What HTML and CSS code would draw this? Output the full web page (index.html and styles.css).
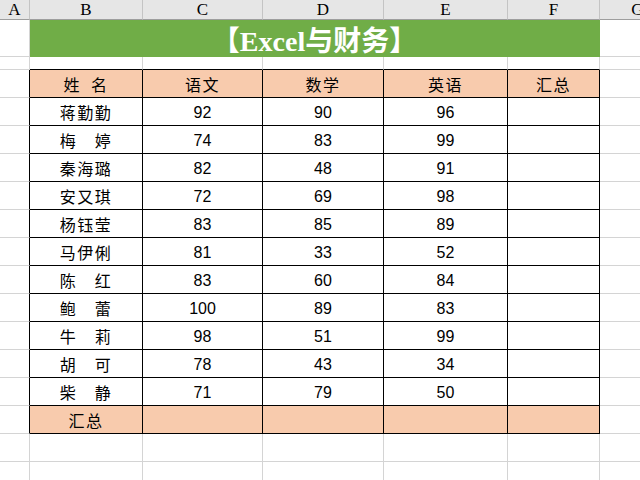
FILE: index.html
```html
<!DOCTYPE html>
<html lang="zh">
<head>
<meta charset="utf-8">
<title>Excel与财务</title>
<link rel="stylesheet" href="styles.css">
</head>
<body>
<div class="sheet">
  <div class="c hd">A</div><div class="c hd">B</div><div class="c hd">C</div><div class="c hd">D</div><div class="c hd">E</div><div class="c hd">F</div><div class="c hd">G</div>

  <div class="c"></div><div class="c title">【Excel与财务】</div><div class="c"></div>

  <div class="c"></div><div class="c tp"></div><div class="c tp"></div><div class="c tp"></div><div class="c tp"></div><div class="c tp"></div><div class="c"></div>

  <div class="c lt"></div><div class="c t pk txt">姓&nbsp;&nbsp;名</div><div class="c t pk txt">语文</div><div class="c t pk txt">数学</div><div class="c t pk txt">英语</div><div class="c t pk txt">汇总</div><div class="c"></div>

  <div class="c lt"></div><div class="c t txt">蒋勤勤</div><div class="c t num">92</div><div class="c t num">90</div><div class="c t num">96</div><div class="c t"></div><div class="c"></div>
  <div class="c lt"></div><div class="c t txt">梅　婷</div><div class="c t num">74</div><div class="c t num">83</div><div class="c t num">99</div><div class="c t"></div><div class="c"></div>
  <div class="c lt"></div><div class="c t txt">秦海璐</div><div class="c t num">82</div><div class="c t num">48</div><div class="c t num">91</div><div class="c t"></div><div class="c"></div>
  <div class="c lt"></div><div class="c t txt">安又琪</div><div class="c t num">72</div><div class="c t num">69</div><div class="c t num">98</div><div class="c t"></div><div class="c"></div>
  <div class="c lt"></div><div class="c t txt">杨钰莹</div><div class="c t num">83</div><div class="c t num">85</div><div class="c t num">89</div><div class="c t"></div><div class="c"></div>
  <div class="c lt"></div><div class="c t txt">马伊俐</div><div class="c t num">81</div><div class="c t num">33</div><div class="c t num">52</div><div class="c t"></div><div class="c"></div>
  <div class="c lt"></div><div class="c t txt">陈　红</div><div class="c t num">83</div><div class="c t num">60</div><div class="c t num">84</div><div class="c t"></div><div class="c"></div>
  <div class="c lt"></div><div class="c t txt">鲍　蕾</div><div class="c t num">100</div><div class="c t num">89</div><div class="c t num">83</div><div class="c t"></div><div class="c"></div>
  <div class="c lt"></div><div class="c t txt">牛　莉</div><div class="c t num">98</div><div class="c t num">51</div><div class="c t num">99</div><div class="c t"></div><div class="c"></div>
  <div class="c lt"></div><div class="c t txt">胡　可</div><div class="c t num">78</div><div class="c t num">43</div><div class="c t num">34</div><div class="c t"></div><div class="c"></div>
  <div class="c lt"></div><div class="c t txt">柴　静</div><div class="c t num">71</div><div class="c t num">79</div><div class="c t num">50</div><div class="c t"></div><div class="c"></div>

  <div class="c lt"></div><div class="c t pk txt">汇总</div><div class="c t pk"></div><div class="c t pk"></div><div class="c t pk"></div><div class="c t pk"></div><div class="c"></div>

  <div class="c"></div><div class="c"></div><div class="c"></div><div class="c"></div><div class="c"></div><div class="c"></div><div class="c"></div>
  <div class="c"></div><div class="c"></div><div class="c"></div><div class="c"></div><div class="c"></div><div class="c"></div><div class="c"></div>
</div>
</body>
</html>
```

FILE: styles.css
```css
html, body {
  margin: 0;
  padding: 0;
  background: #ffffff;
  overflow: hidden;
}

.sheet {
  display: grid;
  grid-template-columns: 30px 113px 120px 121px 124px 92px 76px;
  grid-template-rows: 20px 37px 13px repeat(15, 28px);
  width: 676px;
}

.c {
  box-sizing: border-box;
  border-right: 1px solid #d4d4d4;
  border-bottom: 1px solid #d4d4d4;
  display: flex;
  align-items: center;
  justify-content: center;
  color: #000;
}

.hd {
  background: #e6e6e6;
  border-right: 1px solid #c4c4c4;
  border-bottom: 1px solid #9e9e9e;
  font-family: "Liberation Serif", serif;
  font-size: 17px;
  padding-top: 1px;
}

.title {
  grid-column: span 5;
  background: #70ad47;
  border-right: 1px solid #70ad47;
  border-bottom: 1px solid #70ad47;
  color: #ffffff;
  font-family: "Liberation Serif", "Noto Sans CJK SC", serif;
  font-weight: bold;
  font-size: 28px;
  padding-top: 2px;
}

.tp {
  border-bottom: 1px solid #000;
}

.lt {
  border-right: 1px solid #000;
}

.t {
  border-right: 1px solid #000;
  border-bottom: 1px solid #000;
}

.pk {
  background: #f8cbad;
}

.txt {
  font-family: "Noto Sans CJK SC", sans-serif;
  font-size: 16px;
  letter-spacing: 1.5px;
  padding-top: 1px;
}

.num {
  font-family: "Liberation Sans", Arial, sans-serif;
  font-size: 16px;
  padding-top: 2px;
}
```
